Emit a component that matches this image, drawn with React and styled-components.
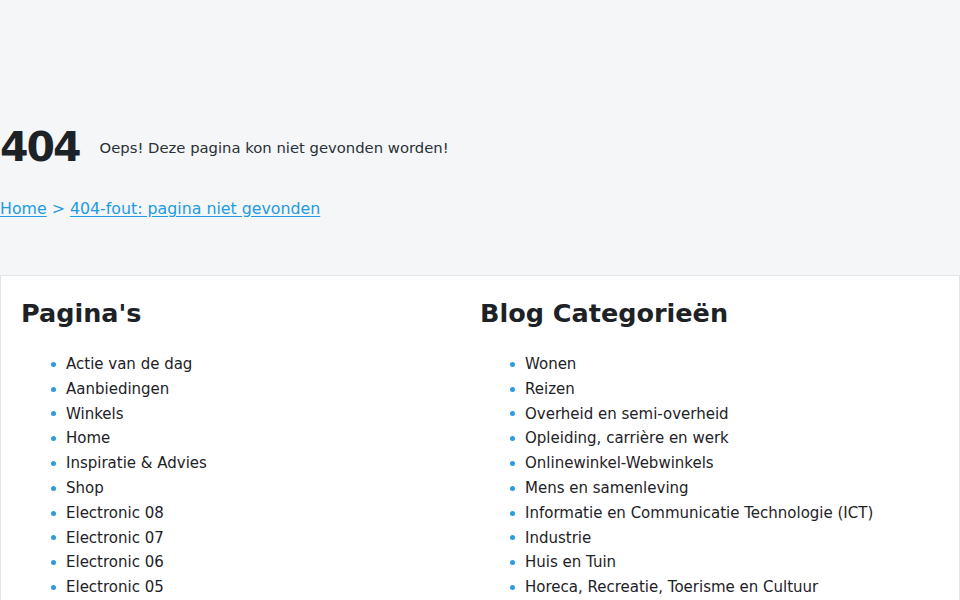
import React from 'react';
import styled, { createGlobalStyle } from 'styled-components';

const GlobalStyle = createGlobalStyle`
  html, body {
    margin: 0;
    padding: 0;
    background: #f4f6f8;
    font-family: "DejaVu Sans", "Noto Sans", sans-serif;
    color: #1d2227;
  }
`;

const Hero = styled.header`
  height: 275px;
  box-sizing: border-box;
  padding-top: 121px;
`;

const TitleRow = styled.div`
  display: flex;
  align-items: center;
  gap: 20px;
`;

const Code = styled.h1`
  margin: 0;
  font-size: 41px;
  font-weight: 700;
  line-height: 52px;
  letter-spacing: -2px;
`;

const Message = styled.p`
  margin: 0;
  font-size: 14.8px;
  color: #2a3036;
`;

const Crumbs = styled.nav`
  margin-top: 26px;
  font-size: 15.8px;
  color: #1e9be2;
  a {
    color: inherit;
    text-decoration: underline;
    text-underline-offset: 2px;
  }
`;

const Card = styled.section`
  background: #fff;
  border: 1px solid #e2e4e7;
  padding: 16px 20px 0;
  display: grid;
  grid-template-columns: 1fr 1fr;
`;

const Column = styled.div``;

const Heading = styled.h2`
  margin: 0;
  font-size: 25.5px;
  font-weight: 600;
  line-height: 42px;
`;

const List = styled.ul`
  list-style: none;
  margin: 18px 0 0;
  padding: 0 0 0 30px;
`;

const Item = styled.li`
  display: flex;
  align-items: center;
  gap: 10px;
  font-size: 15px;
  line-height: 24.8px;
  &::before {
    content: '';
    width: 5px;
    height: 5px;
    border-radius: 50%;
    background: #2d9be0;
    flex: none;
  }
`;

const pages = [
  'Actie van de dag',
  'Aanbiedingen',
  'Winkels',
  'Home',
  'Inspiratie & Advies',
  'Shop',
  'Electronic 08',
  'Electronic 07',
  'Electronic 06',
  'Electronic 05',
];

const categories = [
  'Wonen',
  'Reizen',
  'Overheid en semi-overheid',
  'Opleiding, carrière en werk',
  'Onlinewinkel-Webwinkels',
  'Mens en samenleving',
  'Informatie en Communicatie Technologie (ICT)',
  'Industrie',
  'Huis en Tuin',
  'Horeca, Recreatie, Toerisme en Cultuur',
];

export default function App() {
  return (
    <>
      <GlobalStyle />
      <Hero>
        <TitleRow>
          <Code>404</Code>
          <Message>Oeps! Deze pagina kon niet gevonden worden!</Message>
        </TitleRow>
        <Crumbs>
          <a href="#">Home</a> &gt; <a href="#">404-fout: pagina niet gevonden</a>
        </Crumbs>
      </Hero>
      <Card>
        <Column>
          <Heading>Pagina's</Heading>
          <List>
            {pages.map((p) => (
              <Item key={p}>{p}</Item>
            ))}
          </List>
        </Column>
        <Column>
          <Heading>Blog Categorieën</Heading>
          <List>
            {categories.map((c) => (
              <Item key={c}>{c}</Item>
            ))}
          </List>
        </Column>
      </Card>
    </>
  );
}
